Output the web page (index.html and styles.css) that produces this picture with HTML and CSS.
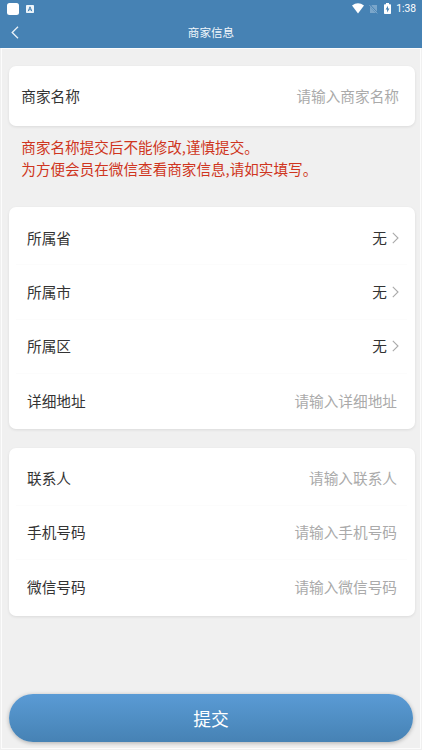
FILE: index.html
```html
<!DOCTYPE html>
<html lang="zh-CN">
<head>
<meta charset="utf-8">
<title>商家信息</title>
<link rel="stylesheet" href="styles.css">
</head>
<body>
<div class="screen">
  <header class="header">
    <div class="status">
      <span class="notice"></span>
      <svg class="keyboard" width="8" height="8" viewBox="0 0 8 8"><rect width="8" height="8" rx=".8" fill="#eef5fa"/><path d="M2.2 6.2L4 1.8l1.8 4.4M2.9 4.8h2.2" fill="none" stroke="#4682b4" stroke-width="1"/></svg>
      <svg class="wifi" width="12" height="11" viewBox="0 0 12 11"><path d="M0 2.6Q6-2 12 2.6L6 10.4z" fill="#fff"/></svg>
      <svg class="sim" width="9" height="10" viewBox="0 0 9 10"><path d="M3 1h5v8H1V3z" fill="#7ba6ca"/><path d="M.5.8l8 8.7" stroke="#4682b4" stroke-width="1.8"/><path d="M.5 1.2l7.7 8.2" stroke="#96b8d5" stroke-width=".8"/></svg>
      <svg class="battery" width="7" height="11" viewBox="0 0 7 11"><path d="M2 0h3v1.2h1.2q.8 0 .8.8v8.2q0 .8-.8.8H.8q-.8 0-.8-.8V2q0-.8.8-.8H2z" fill="#fff"/><path d="M4 2.8L1.6 6.6h1.5V9.4l2.4-4H4z" fill="#4682b4"/></svg>
      <span class="clock">1:38</span>
    </div>
    <div class="nav">
      <svg class="back" width="8" height="13" viewBox="0 0 8 13"><path d="M7 .8L1.2 6.5 7 12.2" fill="none" stroke="#e9f2f8" stroke-width="1.3"/></svg>
      <h1 class="title">商家信息</h1>
    </div>
  </header>
  <main class="content">
    <section class="card card-name">
      <div class="row"><span>商家名称</span><span class="hint">请输入商家名称</span></div>
    </section>
    <p class="warning">商家名称提交后不能修改,谨慎提交。<br>为方便会员在微信查看商家信息,请如实填写。</p>
    <section class="card card-address">
      <div class="row"><span>所属省</span><span class="value">无<svg width="7" height="12" viewBox="0 0 7 12"><path d="M.8.8L6 6 .8 11.2"/></svg></span></div>
      <div class="row"><span>所属市</span><span class="value">无<svg width="7" height="12" viewBox="0 0 7 12"><path d="M.8.8L6 6 .8 11.2"/></svg></span></div>
      <div class="row"><span>所属区</span><span class="value">无<svg width="7" height="12" viewBox="0 0 7 12"><path d="M.8.8L6 6 .8 11.2"/></svg></span></div>
      <div class="row"><span>详细地址</span><span class="hint">请输入详细地址</span></div>
    </section>
    <section class="card card-contact">
      <div class="row"><span>联系人</span><span class="hint">请输入联系人</span></div>
      <div class="row"><span>手机号码</span><span class="hint">请输入手机号码</span></div>
      <div class="row"><span>微信号码</span><span class="hint">请输入微信号码</span></div>
    </section>
    <button class="submit" type="button">提交</button>
  </main>
</div>
</body>
</html>
```
FILE: styles.css
```css
* { box-sizing: border-box; }
body {
  margin: 0;
  background: #f0f0f0;
  color: #333;
  font: 14.67px/22px "Noto Sans CJK SC", sans-serif;
}
.screen { height: 750px; display: flex; flex-direction: column; }
.header { height: 48px; background: #4682b4; color: #fff; }
.status { height: 17px; padding: 0 6px 0 7px; display: flex; align-items: center; }
.notice { width: 12px; height: 12px; border-radius: 2.5px; background: #fff; }
.keyboard { margin-left: 7px; }
.wifi { margin-left: auto; }
.sim { margin-left: 5px; }
.battery { margin-left: 6px; }
.clock { margin-left: 5px; font: 400 10.3px/17px Roboto, sans-serif; }
.nav {
  height: 30px;
  padding: 0 11px;
  display: grid;
  grid-template-columns: 8px 1fr 8px;
  align-items: center;
}
.title {
  margin: 0;
  text-align: center;
  font-size: 11.6px;
  line-height: 29px;
  font-weight: 400;
  color: #f2f7fb;
}
.content {
  height: 701px;
  margin: 0 1px;
  padding: 17px 6px 0 7px;
  border: 1px solid #fcfcfc;
}
.card {
  width: 405.5px;
  border-radius: 7px;
  background: #fff;
  box-shadow: 0 1px 3px rgba(0, 0, 0, .09);
}
.row { display: flex; align-items: center; justify-content: space-between; }
.card-name { padding: 0 15.5px 0 12.3px; }
.card-name .row { height: 60px; }
.warning {
  margin: 10px 0 0;
  padding-left: 12.3px;
  height: 45px;
  font-size: 14.6px;
  line-height: 22.3px;
  color: #cf3520;
}
.card-address, .card-contact { padding: 4px 8px 0 7px; }
.card-address { margin-top: 26px; height: 222px; }
.card-contact { margin-top: 18.5px; height: 168.5px; }
.card-address .row, .card-contact .row {
  height: 54.3px;
  padding: 0 9.5px 0 11px;
  border-bottom: 1px solid #fcfcfc;
}
.card .row:last-child { border-bottom: 0; }
.hint { color: #aaa; }
.value { display: flex; align-items: center; gap: 5px; margin-right: -2px; }
.value path { fill: none; stroke: #aaa; stroke-width: 1.1; }
.submit {
  display: block;
  width: 404px;
  height: 48px;
  margin: 77.5px 0 0;
  padding: 0;
  border: 0;
  border-radius: 24px;
  background: linear-gradient(#5a9bd5, #4682b4);
  box-shadow: 0 1px 4px rgba(0, 0, 0, .28);
  color: #fff;
  font: 17.8px/46px "Noto Sans CJK SC", sans-serif;
}
```
